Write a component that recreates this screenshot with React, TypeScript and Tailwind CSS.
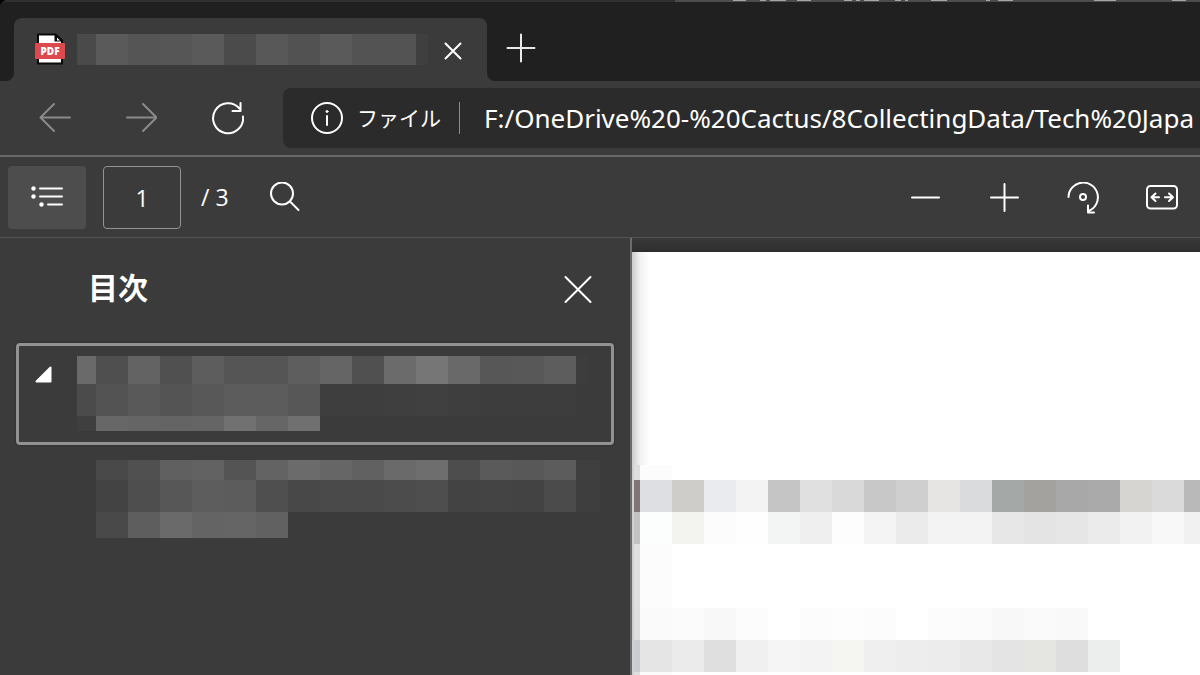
import React from "react";

type Cell = [width: number, color: string];
type Row = { height: number; cells: Cell[] };

function Mosaic({ rows }: { rows: Row[] }) {
  const width = Math.max(...rows.map((r) => r.cells.reduce((s, c) => s + c[0], 0)));
  const height = rows.reduce((s, r) => s + r.height, 0);
  let y = 0;
  return (
    <svg width={width} height={height} shapeRendering="crispEdges" aria-hidden="true" className="block shrink-0">
      {rows.map((row, i) => {
        let x = 0;
        const top = y;
        y += row.height;
        return (
          <g key={i}>
            {row.cells.map(([w, color], j) => {
              const left = x;
              x += w;
              return <rect key={j} x={left} y={top} width={w} height={row.height} fill={color} />;
            })}
          </g>
        );
      })}
    </svg>
  );
}

const cells = (first: number, colors: string): Cell[] =>
  colors.split(" ").map((c, i) => [i === 0 ? first : 32, "#" + c]);

const tabTitle: Row[] = [
  { height: 31, cells: [...cells(19, "4a4a4a 5a5a5a 555555 565656 5a5a5a 4b4b4b 585858 525252 5a5a5a 535353 535353"), [12, "#3f3f3f"]] },
];

const outlineFirst: Row[] = [
  { height: 28, cells: [...cells(19, "6a6a6a 4f4f4f 636363 505050 5d5d5d 555555 555555 5e5e5e 656565 505050 6b6b6b 767676 696969 575757 585858 5d5d5d"), [12, "#3d3d3d"]] },
  { height: 32, cells: cells(19, "4b4b4b 535353 595959 545454 585858 5c5c5c 5c5c5c 575757 3e3e3e 3e3e3e 3f3f3f 404040 3e3e3e 3d3d3d 3d3d3d 3d3d3d") },
  { height: 15, cells: cells(19, "3f3f3f 676767 656565 646464 656565 717171 666666 707070") },
];

const outlineSecond: Row[] = [
  { height: 20, cells: [...cells(32, "494949 505050 606060 626262 545454 636363 6b6b6b 666666 616161 6a6a6a 6e6e6e 4d4d4d 5a5a5a 585858 5c5c5c"), [24, "#3f3f3f"]] },
  { height: 32, cells: [...cells(32, "434343 4e4e4e 575757 5d5d5d 5c5c5c 4f4f4f 484848 4a4a4a 4a4a4a 4c4c4c 4e4e4e 434343 444444 434343 4b4b4b"), [24, "#3e3e3e"]] },
  { height: 26, cells: cells(32, "494949 5e5e5e 6a6a6a 646464 656565 616161") },
];

const pageText: Row[] = [
  { height: 15, cells: cells(6, "dedede fcfcfc") },
  { height: 32, cells: cells(6, "827675 dedfe2 cfcdca e9ebee f3f3f3 c5c5c5 e0e0e0 d9d9d9 c8c8c8 cfcfcf e6e5e3 d9dbdd a4a8a6 a4a29f a8a8a8 aaaaaa d6d5d2 dadada b9b9b9") },
  { height: 32, cells: cells(6, "c2c2c2 fbfefd f3f3f0 fcfcfc fefefe f2f5f4 efefef fdfdfd f4f4f4 ebebeb f3f3f3 f3f3f3 e7e7e7 e4e4e4 e6e6e6 ebebeb f2f2f2 f8f8f8 f1f1f1") },
  { height: 64, cells: cells(6, "e0e0e0 fcfcfc") },
  { height: 32, cells: cells(6, "dfdfdf fafafa fbfbfb f8f8f8 fcfcfc ffffff fcfcfc fdfdfd fcfcfc ffffff fcfcfc fbfbfb f8f8f8 fafafa f9f9f9") },
  { height: 32, cells: cells(6, "c9cdd0 e5e5e5 ebebeb dfdfdf f0f0f0 f5f5f5 f3f3f3 f5f5f2 efefef ededed ececec e8e8e8 e4e4e4 e5e5e2 dedede ebeeec") },
  { height: 3, cells: cells(6, "dedede fbfbfb") },
];

function Icon({ size = 32, width = 2, children }: { size?: number; width?: number; children: React.ReactNode }) {
  return (
    <svg
      width={size}
      height={size}
      viewBox={`0 0 ${size} ${size}`}
      fill="none"
      stroke="currentColor"
      strokeWidth={width}
      strokeLinecap="round"
      strokeLinejoin="round"
      aria-hidden="true"
      className="block shrink-0"
    >
      {children}
    </svg>
  );
}

function PdfIcon() {
  return (
    <svg width="30" height="32" viewBox="0 0 30 32" aria-hidden="true" className="block shrink-0">
      <path d="M2 0.5H21L28 7V31.5H2Z" fill="#0a0a0a" />
      <path d="M4 2.5H19.5V8.5H26V29.5H4Z" fill="#ffffff" />
      <path d="M22 4.5L25 7.500H22Z" fill="#ffffff" />
      <rect x="0" y="10" width="30" height="16" rx="1" fill="#dc4a4e" />
      <text x="15" y="21.700" textAnchor="middle" fontSize="10" fontWeight="800" fill="#ffffff" fontFamily="'Open Sans', sans-serif">
        PDF
      </text>
    </svg>
  );
}

const navButton = "flex h-[60px] w-[86px] shrink-0 items-center justify-center";
const toolButton = "flex h-[63px] w-[78px] shrink-0 items-center justify-center";

function TabStrip() {
  return (
    <header className="bg-black">
      <div className="overflow-hidden rounded-tl-lg bg-[#3b3b3b]">
        <div className="flex h-[2px] bg-[#303030]">
          <div className="w-[675px] shrink-0" />
          <div className="flex-1 overflow-hidden bg-[#4c4c4c]">
            <svg width="525" height="2" aria-hidden="true" className="block">
              <path
                d="M58 0.500h13M85 0.500h6M95 0.500h16M122 0.500h14M169 0.500h8M181 0.500h4M189 0.500h15M220 0.500h6M230 0.500h3M256 0.500h16M311 0.500h4M323 0.500h15M419 0.500h22M497 0.500h14"
                stroke="#a5a5a5"
                strokeWidth="1"
              />
            </svg>
          </div>
        </div>
        <div className="h-4 bg-[#202020]" />
        <div className="flex h-[63px]">
          <div className="w-[14px] shrink-0 rounded-br-lg bg-[#202020]" />
          <div className="shrink-0 bg-[#202020]">
            <div className="flex h-[63px] w-[473px] items-center rounded-t-lg bg-[#3b3b3b] pb-px pl-[21px]">
              <PdfIcon />
              <div className="ml-3">
                <Mosaic rows={tabTitle} />
              </div>
              <button type="button" aria-label="Close tab" className="ml-[9px] flex h-9 w-8 items-center justify-center pt-1 text-white">
                <Icon size={20}>
                  <path d="M2.5 2.5L17.5 17.5M17.5 2.5L2.5 17.5" />
                </Icon>
              </button>
            </div>
          </div>
          <div className="flex min-w-0 flex-1 items-center rounded-bl-lg bg-[#202020] pl-4">
            <button type="button" aria-label="New tab" className="mb-[3px] flex h-9 w-9 items-center justify-center text-[#e8e8e8]">
              <Icon>
                <path d="M2.500 16H29.500M16 2.500V29.500" />
              </Icon>
            </button>
          </div>
        </div>
      </div>
    </header>
  );
}

function NavBar() {
  return (
    <nav className="flex items-center overflow-hidden border-b-2 border-[#686868] pt-[7px] pb-[7px] pl-3">
      <button type="button" aria-label="Back" className={navButton + " text-[#8a8a8a]"}>
        <Icon>
          <path d="M1.5 15.5H31M15 2L1.5 15.5L15 29" />
        </Icon>
      </button>
      <button type="button" aria-label="Forward" className={navButton + " text-[#8a8a8a]"}>
        <Icon>
          <path d="M2 15.5H31.5M18 2L31.5 15.5L18 29" />
        </Icon>
      </button>
      <button type="button" aria-label="Reload" className={navButton + " text-white"}>
        <Icon size={34}>
          <path d="M33 15.5A15 15 0 1 1 29.5 7.5M30.500 2V10H22.500" />
        </Icon>
      </button>
      <div className="ml-[13px] flex h-[60px] min-w-0 flex-1 items-center rounded-l-lg bg-[#2b2b2b] pl-7 text-white">
        <Icon>
          <circle cx="16" cy="16" r="15" />
          <path d="M16 14V23" />
          <circle cx="16" cy="9.5" r="1" fill="currentColor" strokeWidth="1" />
        </Icon>
        <label htmlFor="address" className="ml-[14px] shrink-0 text-[21px] leading-8">
          ファイル
        </label>
        <div className="mr-6 ml-[18px] h-8 w-px shrink-0 bg-[#8a8a8a]" />
        <input
          id="address"
          type="text"
          defaultValue="F:/OneDrive%20-%20Cactus/8CollectingData/Tech%20Japa"
          className="h-10 min-w-0 flex-1 bg-transparent font-['Noto_Sans',sans-serif] text-[26px] outline-none"
        />
      </div>
    </nav>
  );
}

function PdfToolbar() {
  return (
    <div className="flex items-center border-b border-[#545454] pt-[9px] pb-2 pl-2 text-white">
      <button type="button" aria-label="Table of contents" className={toolButton + " rounded bg-[#4d4d4d]"}>
        <Icon>
          <path d="M9 6.5H31M9 14.5H31M17 22.5H31" />
          <g fill="currentColor" stroke="none">
            <circle cx="2.5" cy="6.5" r="2.2" />
            <circle cx="2.5" cy="14.5" r="2.2" />
            <circle cx="10.5" cy="22.5" r="2.2" />
          </g>
        </Icon>
      </button>
      <input
        type="text"
        aria-label="Page"
        defaultValue="1"
        className="ml-[17px] h-[63px] w-[78px] shrink-0 rounded border border-[#929292] bg-transparent text-center text-[23px] outline-none"
      />
      <span className="ml-5 shrink-0 text-[23px]">/ 3</span>
      <button type="button" aria-label="Search" className="ml-10 flex h-[63px] w-8 shrink-0 items-center justify-center">
        <Icon>
          <circle cx="13" cy="11.5" r="11" />
          <path d="M21 19.5L29.500 28" />
        </Icon>
      </button>
      <div className="-mr-px ml-auto flex gap-px">
        <button type="button" aria-label="Zoom out" className={toolButton}>
          <Icon>
            <path d="M3 15.500H30" />
          </Icon>
        </button>
        <button type="button" aria-label="Zoom in" className={toolButton}>
          <Icon>
            <path d="M3 15.500H30M16.500 2V29" />
          </Icon>
        </button>
        <button type="button" aria-label="Rotate" className={toolButton}>
          <Icon>
            <path d="M1.500 15A14.700 14.700 0 1 1 21.500 29M21 23.500V30.500H27" />
            <circle cx="16" cy="15" r="3" />
          </Icon>
        </button>
        <button type="button" aria-label="Fit to width" className={toolButton}>
          <Icon>
            <rect x="1" y="4" width="30" height="22.500" rx="3.5" />
            <path d="M13 15.300H6M9.500 11.500L5.500 15.300L9.500 19M19 15.300H26M23 11.500L27 15.300L23 19" />
          </Icon>
        </button>
      </div>
    </div>
  );
}

function Outline() {
  return (
    <aside className="w-[632px] shrink-0 border-r-2 border-[#6c6c6c] px-4 text-white">
      <div className="flex h-[105px] items-center pr-4 pb-1 pl-[72px]">
        <h2 className="flex-1 pb-[2px] text-[30px] leading-10 font-bold">目次</h2>
        <button type="button" aria-label="Close" className="flex h-10 w-10 items-center justify-center">
          <Icon>
            <path d="M3.5 4L28.500 29M28.500 4L3.5 29" />
          </Icon>
        </button>
      </div>
      <button
        type="button"
        aria-label="Section 1"
        className="flex w-full items-start rounded border-3 border-[#929292] pt-[10px] pb-[11px] pl-4 shadow-[0_0_2px_#222222]"
      >
        <svg width="17" height="17" viewBox="0 0 17 17" aria-hidden="true" className="mt-[10px] block shrink-0">
          <path d="M15.5 1.5V15.5H1.5Z" fill="#ffffff" stroke="#ffffff" strokeWidth="2" strokeLinejoin="round" />
        </svg>
        <div className="ml-[25px]">
          <Mosaic rows={outlineFirst} />
        </div>
      </button>
      <button type="button" aria-label="Section 2" className="mt-[15px] block pl-20">
        <Mosaic rows={outlineSecond} />
      </button>
    </aside>
  );
}

export default function App() {
  return (
    <div className="flex min-h-screen flex-col overflow-hidden bg-[#3b3b3b] font-['Open_Sans','Noto_Sans_CJK_JP',sans-serif]">
      <TabStrip />
      <NavBar />
      <PdfToolbar />
      <main className="flex flex-1">
        <Outline />
        <section className="flex min-w-0 flex-1 flex-col bg-linear-to-b from-[#383838] to-[#2e2e2e] to-[14px] pt-[14px]">
          <article className="flex-1 overflow-hidden bg-linear-to-r from-[#cccccc] via-[#f2f2f2] via-[8px] to-white to-[18px] pt-[213px] pl-[2px]">
            <Mosaic rows={pageText} />
          </article>
        </section>
      </main>
    </div>
  );
}
